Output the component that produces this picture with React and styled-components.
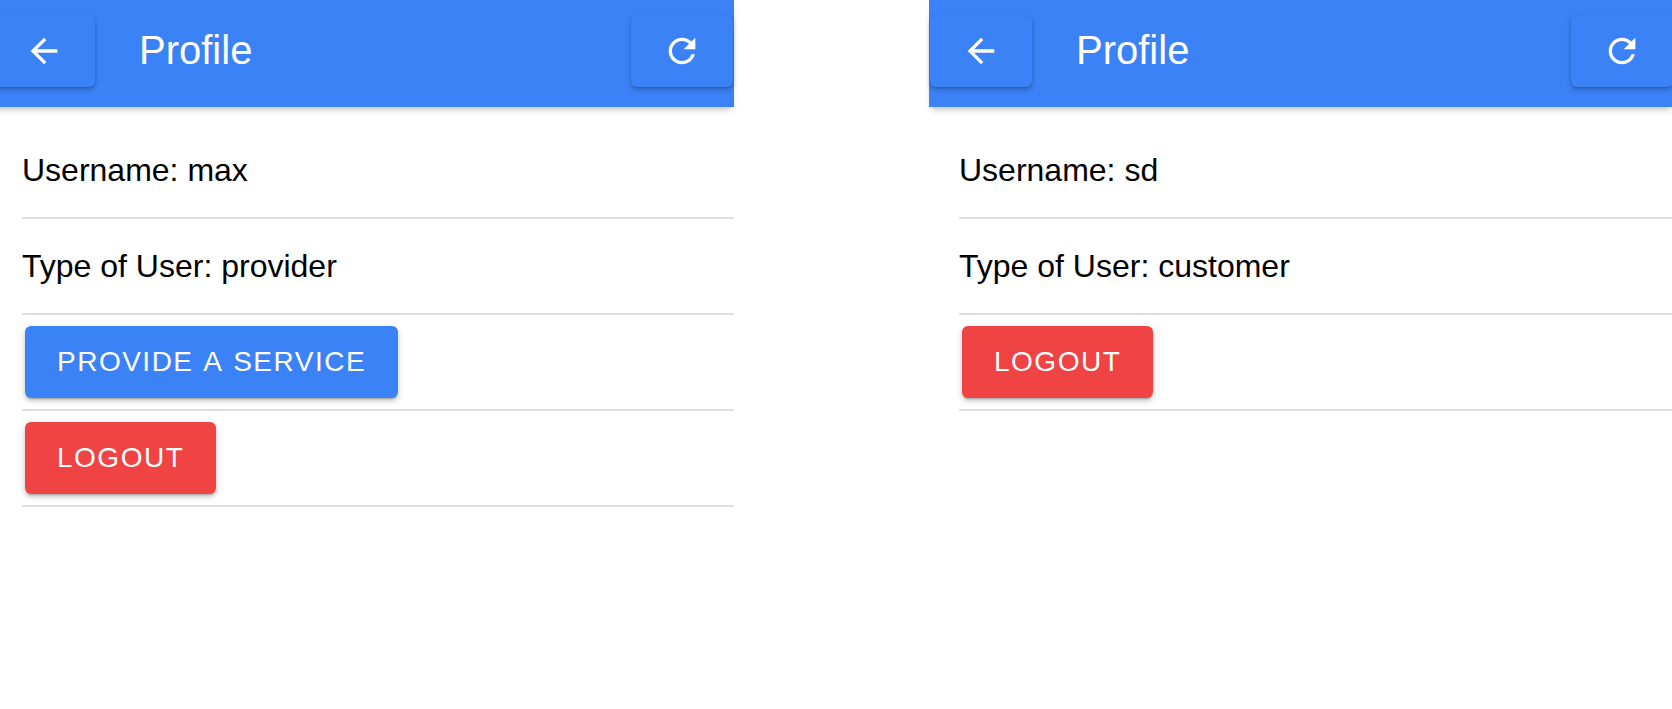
import React from 'react';
import styled, { createGlobalStyle } from 'styled-components';
import { MdArrowBack, MdRefresh } from 'react-icons/md';

const GlobalStyle = createGlobalStyle`
    html, body {
        margin: 0;
        padding: 0;
        background: #ffffff;
        overflow: hidden;
    }
    body {
        font-family: "Liberation Sans", Arial, sans-serif;
    }
`;

// 두 화면을 나란히 놓는 컨테이너
const Screens = styled.div`
    display: flex;
    align-items: flex-start;
    gap: 195px;
    margin-left: -8px;
    width: 1682px;
    height: 709px;
`;

const Screen = styled.div`
    display: flex;
    flex-direction: column;
    width: ${(props) => props.$width}px;
    flex-shrink: 0;
`;

// 상단 바
const Header = styled.div`
    position: relative;
    z-index: 1;
    display: flex;
    align-items: center;
    height: 107px;
    padding: 0 0 6px;
    box-sizing: border-box;
    background-color: #3b82f6;
    box-shadow: 0 5px 7px -3px rgba(0, 0, 0, 0.28);
`;

const IconButton = styled.button`
    display: flex;
    align-items: center;
    justify-content: center;
    width: 102px;
    height: 72px;
    margin: 0 1px;
    padding: 0;
    border: none;
    border-radius: 6px;
    background-color: #3b82f6;
    color: #ffffff;
    box-shadow: 0 3px 5px rgba(0, 0, 0, 0.22), 0 1px 2px rgba(0, 0, 0, 0.12);
    cursor: pointer;

    svg {
        width: 40px;
        height: 40px;
    }
`;

const Title = styled.div`
    flex: 1;
    margin-left: 43px;
    font-size: 40px;
    color: #ffffff;
`;

const Content = styled.div`
    display: flex;
    flex-direction: column;
    padding-top: 16px;
    padding-left: 30px;
`;

// 한 줄 (아래 구분선)
const Row = styled.div`
    display: flex;
    align-items: center;
    height: 94px;
    border-bottom: 2px solid #dddddd;
    font-size: 32px;
    color: #000000;
`;

const ActionButton = styled.button`
    display: flex;
    align-items: center;
    height: 72px;
    margin-left: 3px;
    padding: 0 32px;
    border: none;
    border-radius: 6px;
    background-color: ${(props) => (props.$danger ? '#f04343' : '#3b82f6')};
    color: #ffffff;
    font-family: "Liberation Sans", Arial, sans-serif;
    font-size: 28px;
    letter-spacing: 1.5px;
    word-spacing: 2px;
    text-transform: uppercase;
    box-shadow: 0 3px 2px -2px rgba(0, 0, 0, 0.2), 0 3px 4px rgba(0, 0, 0, 0.14), 0 2px 8px rgba(0, 0, 0, 0.12);
    cursor: pointer;
`;

const ProfileScreen = ({ width, username, userType }) => {
	return (
		<Screen $width={width}>
			<Header>
				<IconButton aria-label="back">
					<MdArrowBack />
				</IconButton>
				<Title>Profile</Title>
				<IconButton aria-label="refresh">
					<MdRefresh />
				</IconButton>
			</Header>
			<Content>
				<Row>Username: {username}</Row>
				<Row>Type of User: {userType}</Row>
				{/* 제공자만 서비스 등록 가능 */}
				{userType === 'provider' && (
					<Row>
						<ActionButton>Provide a service</ActionButton>
					</Row>
				)}
				<Row>
					<ActionButton $danger>Logout</ActionButton>
				</Row>
			</Content>
		</Screen>
	);
};

const App = () => {
	return (
		<>
			<GlobalStyle />
			<Screens>
				<ProfileScreen width={742} username="max" userType="provider" />
				<ProfileScreen width={745} username="sd" userType="customer" />
			</Screens>
		</>
	);
};

export default App;
